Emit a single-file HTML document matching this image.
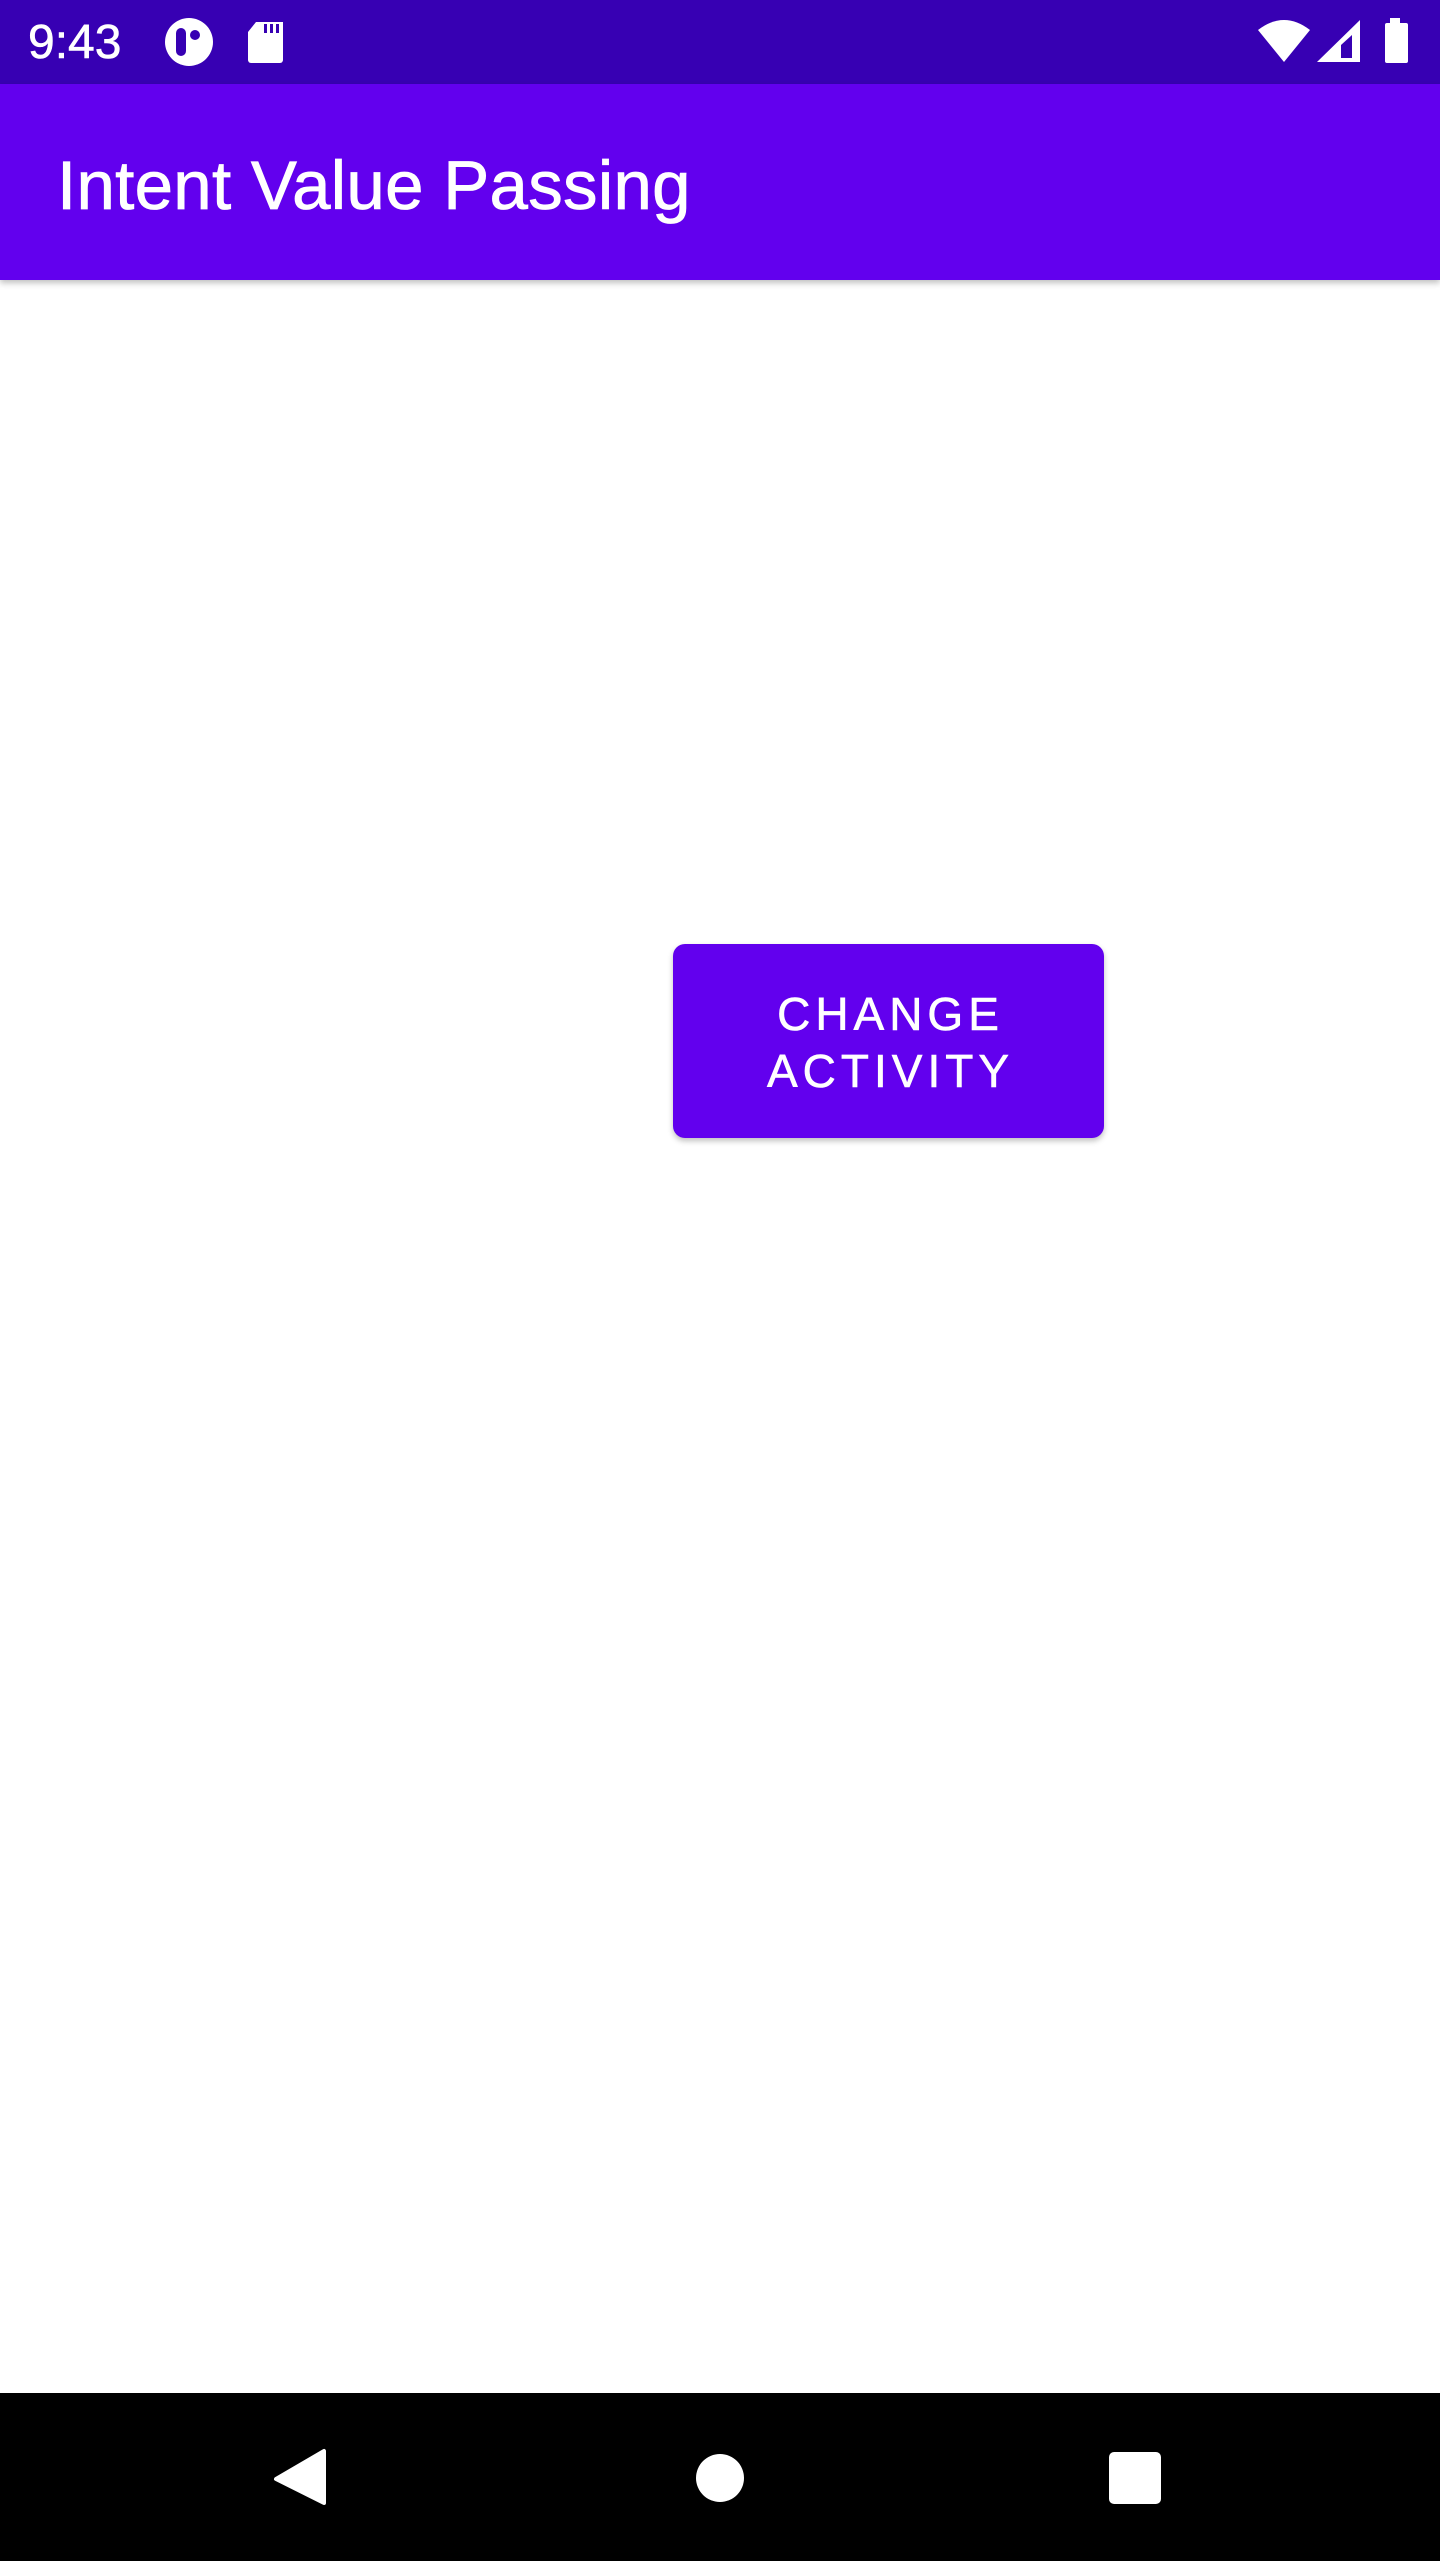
<!DOCTYPE html>
<html><head><meta charset="utf-8"><style>
body{margin:0;width:1440px;height:2560px;position:relative;background:#fff;font-family:"Liberation Sans",sans-serif;overflow:hidden}
.sb{position:absolute;left:0;top:0;width:1440px;height:84px;background:#3700B3}
.ab{position:absolute;left:0;top:84px;width:1440px;height:196px;background:#6200EE;box-shadow:0 3px 6px rgba(0,0,0,0.25)}
.title{position:absolute;left:57px;top:60px;color:#fff;font-size:69px;line-height:84px;-webkit-text-stroke:0.8px #fff;letter-spacing:0.3px}
.time{position:absolute;left:28px;top:15px;color:#fff;font-size:48px;line-height:56px;-webkit-text-stroke:0.6px #fff}
.btn{position:absolute;left:673px;top:944px;width:431px;height:194px;background:#6200EE;border-radius:12px;box-shadow:0 3px 6px rgba(0,0,0,0.25);color:#fff;font-size:46px;letter-spacing:5px;text-align:center;line-height:57px;-webkit-text-stroke:0.6px #fff;box-sizing:border-box;padding-top:42px;padding-left:4px}
.nb{position:absolute;left:0;top:2393px;width:1440px;height:168px;background:#000}
</style></head><body>
<div class="sb">
<div class="time">9:43</div>
<svg style="position:absolute;left:0;top:0" width="1440" height="84">
<circle cx="189" cy="42" r="24" fill="#fff"/>
<rect x="176" y="28" width="10" height="28" rx="5" fill="#3700B3"/>
<circle cx="195" cy="35" r="5" fill="#3700B3"/>
<path d="M256 22 H283 V60 a3 3 0 0 1 -3 3 H251 a3 3 0 0 1 -3 -3 V32 Z" fill="#fff"/>
<rect x="264" y="24" width="3" height="9" fill="#3700B3"/><rect x="270" y="24" width="3" height="9" fill="#3700B3"/><rect x="276" y="24" width="3" height="9" fill="#3700B3"/>
<path d="M1258 30 Q1284 10 1310 30 L1284 62 Z" fill="#fff"/>
<path d="M1317 62 L1360 20 V62 Z" fill="#fff"/>
<path d="M1341 45 L1352 35 V58 H1341 Z" fill="#3700B3"/>
<rect x="1390" y="18" width="10" height="6" fill="#fff"/>
<rect x="1385" y="23" width="23" height="40" rx="2" fill="#fff"/>
</svg>
</div>
<div class="ab"><div class="title">Intent Value Passing</div></div>
<div class="btn">CHANGE<br>ACTIVITY</div>
<div class="nb">
<svg width="1440" height="168">
<path d="M324 58 V110 L276 86 Z" fill="#fff" stroke="#fff" stroke-width="4" stroke-linejoin="round"/>
<circle cx="720" cy="85" r="24" fill="#fff"/>
<rect x="1109" y="59" width="52" height="52" rx="5" fill="#fff"/>
</svg>
</div>
</body></html>
